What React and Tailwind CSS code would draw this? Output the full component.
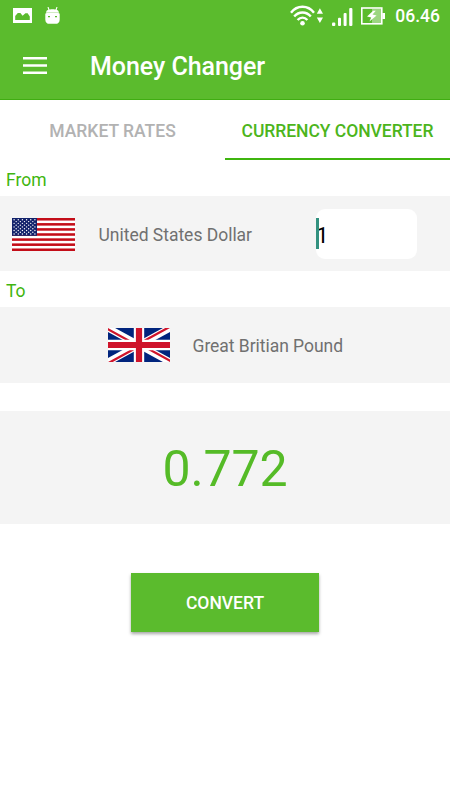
import { useState } from 'react'

const RATE = 0.772

const StatusBar = () => (
  <div className="flex h-[31px] items-center justify-between pl-[13px] pr-[10px]">
    <div className="flex items-center gap-[13px]">
      <svg width="19" height="15" viewBox="0 0 19 15" className="block">
        <path fill="#fff" fillRule="evenodd" d="M0 0h19v15H0zM2.2 12h14.6V8.600L14.600 5.200h-2.200L9.600 7.800 7.400 5H4.800L2.200 8z" />
      </svg>
      <svg width="15" height="17" viewBox="0 0 15 17" className="-mt-px block">
        <path stroke="#fff" strokeWidth="1.100" d="M3 0l1 3M12 0l-1 3" />
        <path fill="#fff" fillRule="evenodd" d="M1.2 5.2C1.2 3 4 2.2 7.500 2.200s6.300.8 6.300 3v1.200h.9v6c0 3-1.800 4.400-4.100 4.400H4.400C2.100 16.800.3 15.400.3 12.400v-6h.9zM3 9v1.200h2V9zm7 0v1.200h2V9z" />
        <path stroke="#5bbb2d" strokeWidth=".6" opacity=".6" d="M1.500 5.300h12" />
      </svg>
    </div>
    <div className="flex items-center">
      <svg width="34" height="22" viewBox="0 0 34 22" className="block">
        <g fill="none" stroke="#fff" strokeWidth="2.400">
          <path d="M1 7.800C7 -.2 18 -.2 24 7.800" />
          <path d="M4.200 11.500c4.600-5.300 12-5.300 16.600 0" />
          <path d="M7.600 15c2.800-3.200 7-3.200 9.800 0" />
        </g>
        <circle cx="12.500" cy="18.300" r="2.300" fill="#fff" />
        <path fill="#fff" d="M26.800 8.700l3.100-5.500 3.100 5.500zM26.800 12.500H33l-3.100 5.500z" />
      </svg>
      <svg width="21" height="18" viewBox="0 0 21 18" className="ml-[8px] mt-[2px] block">
        <g fill="#fff">
          <rect x="0" y="14.500" width="3.300" height="3.500" rx="1" />
          <rect x="6" y="9.800" width="3" height="8.200" rx="1" />
          <rect x="11.600" y="5" width="3" height="13" rx="1" />
          <rect x="17.200" y="0" width="3.200" height="18" rx="1" />
        </g>
      </svg>
      <svg width="24" height="18" viewBox="0 0 24 18" className="ml-[8px] block">
        <rect x="11" y="2" width="9" height="14" fill="#fff" opacity=".4" />
        <rect x=".8" y="1" width="20" height="15.800" fill="none" stroke="#fff" strokeWidth="1.600" />
        <path fill="#fff" d="M21.300 6H24v6h-2.700zM12.200 3.800L6 9.500l4.200 1-1.800 4 7.200-6-4.100-1 3.300-3.700z" />
      </svg>
      <span className="ml-[10px] mt-[3px] text-[17.500px] font-medium leading-none">06.46</span>
    </div>
  </div>
)

const UsFlag = () => (
  <svg width="63" height="33" viewBox="0 0 63 33" className="mt-px block shrink-0">
    <rect width="63" height="33" fill="#fff" />
    {[0, 1, 2, 3, 4, 5, 6].map((i) => (
      <rect key={i} y={i * 5.08} width="63" height="2.540" fill="#c30d18" />
    ))}
    <rect width="25" height="17.800" fill="#12226b" />
    <g fill="#fff">
      {[0, 1, 2, 3, 4, 5, 6, 7, 8].map((row) =>
        [0, 1, 2, 3, 4, 5].slice(row % 2).map((col) => (
          <circle key={`${row}-${col}`} cx={2.1 + col * 4.16 - (row % 2) * 2.08} cy={1.8 + row * 1.78} r=".7" />
        ))
      )}
    </g>
  </svg>
)

const UkFlag = () => (
  <svg width="62" height="34" viewBox="0 0 62 34" className="block shrink-0">
    <defs>
      <clipPath id="diagonals">
        <path d="M31 17H62V34zM31 17V34H0zM31 17H0V0zM31 17V0H62z" />
      </clipPath>
      <clipPath id="flag">
        <rect width="62" height="34" />
      </clipPath>
    </defs>
    <g clipPath="url(#flag)">
      <rect width="62" height="34" fill="#00247d" />
      <path d="M0 0l62 34M62 0L0 34" stroke="#fff" strokeWidth="6.800" />
      <path d="M0 0l62 34M62 0L0 34" stroke="#cf142b" strokeWidth="4.600" clipPath="url(#diagonals)" />
      <path d="M31 0v34M0 17h62" stroke="#fff" strokeWidth="10.400" />
      <path d="M31 0v34M0 17h62" stroke="#cf142b" strokeWidth="6.200" />
    </g>
  </svg>
)

const App = () => {
  const [amount, setAmount] = useState('1')
  const [result, setResult] = useState('0.772')

  const handleConvert = () => {
    const value = parseFloat(amount)
    setResult(Number.isNaN(value) ? '0' : String(Number((value * RATE).toFixed(3))))
  }

  return (
    <div className="flex h-[800px] w-[450px] flex-col overflow-hidden bg-white font-[Roboto,sans-serif]">
      {/* Header */}
      <header className="h-[100px] border-b border-[#40ad12] bg-[#5bbb2d] text-white">
        <StatusBar />
        <div className="flex h-[68px] items-center pl-[23px]">
          <button aria-label="Open menu" className="block">
            <svg width="24" height="17" viewBox="0 0 24 17" className="block">
              <path fill="#fff" d="M0 0h24v2.600H0zM0 7.200h24v2.600H0zM0 14.400h24v2.600H0z" />
            </svg>
          </button>
          <h1 className="ml-[43px] mt-[3px] text-[25px] font-medium leading-[30px] tracking-[-0.04px]">Money Changer</h1>
        </div>
      </header>

      {/* Tabs */}
      <nav className="flex h-[60px] text-[17.500px] font-medium">
        <button className="flex-1 pt-[2px] text-[#b2b2b2]">MARKET RATES</button>
        <button className="flex-1 whitespace-nowrap border-b-2 border-[#3fb50f] pt-[4px] tracking-[-0.05px] text-[#4cb51c]">CURRENCY CONVERTER</button>
      </nav>

      <div className="flex h-[36px] items-center pl-[6px] pt-[4px] text-[17.500px] text-[#3fb50f]">From</div>
      <div className="flex h-[75px] items-center bg-[#f4f4f4] pl-[12px] pr-[33px]">
        <UsFlag />
        <span className="ml-[23.500px] mt-[3px] text-[17.500px] tracking-[-0.02px] text-[#707070]">United States Dollar</span>
        <div className="relative ml-auto h-[50px] w-[101px]">
          <input
            className="h-full w-full rounded-[9px] bg-white pt-[2px] text-[22.500px] text-black outline-none"
            value={amount}
            onChange={(e) => setAmount(e.target.value)}
          />
          <span className="absolute left-0 top-[9px] h-[31px] w-[2.500px] bg-[#32917f]" />
        </div>
      </div>

      <div className="flex h-[36px] items-center pl-[6px] pt-[4px] text-[17.500px] text-[#3fb50f]">To</div>
      <div className="flex h-[76px] items-center justify-center bg-[#f4f4f4] pl-px">
        <UkFlag />
        <span className="ml-[22.500px] mt-[2px] text-[17.500px] tracking-[-0.04px] text-[#707070]">Great Britian Pound</span>
      </div>

      <div className="mt-[28px] flex h-[113px] items-center justify-center bg-[#f4f4f4] pt-[4px] text-[50px] tracking-[-0.1px] text-[#55bb27]">
        {result}
      </div>

      <button
        onClick={handleConvert}
        className="mx-auto mt-[49px] h-[59px] w-[188px] bg-[#5bbb2d] pt-[2px] text-[17.500px] font-medium text-white shadow-[0_2px_3px_rgba(0,0,0,0.35)]"
      >
        CONVERT
      </button>
    </div>
  )
}

export default App
